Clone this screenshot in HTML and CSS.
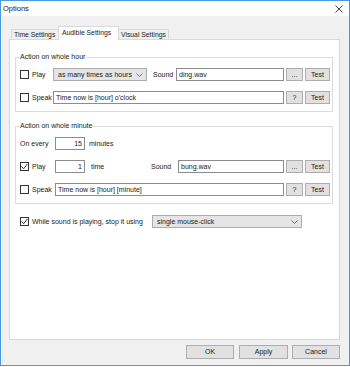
FILE: index.html
```html
<!DOCTYPE html>
<html lang="en">
<head>
    <meta charset="UTF-8">
    <title>Options</title>
    <link rel="stylesheet" href="styles.css">
</head>
<body>
    <div class="window">
        <div class="titlebar">
            <span class="title">Options</span>
            <svg class="close" width="8" height="8" viewBox="0 0 8 8"><path d="M0.5 0.5 L7.5 7.5 M7.5 0.5 L0.5 7.5" stroke="#333" stroke-width="0.9" fill="none"/></svg>
        </div>

        <div class="client">
            <div class="tabs">
                <div class="tab tab-time">Time Settings</div>
                <div class="tab tab-audible active">Audible Settings</div>
                <div class="tab tab-visual">Visual Settings</div>
            </div>

            <div class="panel">
                <!-- whole hour -->
                <div class="group">
                    <div class="group-title">Action on whole hour</div>
                    <div class="row">
                        <div class="lead"><span class="check"></span>Play</div>
                        <div class="select count-select">as many times as hours
                            <svg width="7" height="4" viewBox="0 0 7 4"><path d="M0.5 0.5 L3.5 3.5 L6.5 0.5" stroke="#555" stroke-width="0.8" fill="none"/></svg>
                        </div>
                        <span class="sound-label">Sound</span>
                        <div class="field grow">ding.wav</div>
                        <div class="btn btn-small">...</div>
                        <div class="btn btn-test">Test</div>
                    </div>
                    <div class="row">
                        <div class="lead"><span class="check"></span>Speak</div>
                        <div class="field grow">Time now is [hour] o'clock</div>
                        <div class="btn btn-small">?</div>
                        <div class="btn btn-test">Test</div>
                    </div>
                </div>

                <!-- whole minute -->
                <div class="group group-minute">
                    <div class="group-title">Action on whole minute</div>
                    <div class="row">
                        <div class="lead lead-wide">On every</div>
                        <div class="field num">15</div>
                        <span class="unit">minutes</span>
                    </div>
                    <div class="row">
                        <div class="lead lead-wide"><span class="check checked"><svg width="7" height="7" viewBox="0 0 7 7"><path d="M0.5 3.5 L2.6 5.8 L6.5 0.8" stroke="#222" stroke-width="0.9" fill="none"/></svg></span>Play</div>
                        <div class="field num">1</div>
                        <span class="unit unit-time">time</span>
                        <span class="sound-label sound-label-wide">Sound</span>
                        <div class="field grow">bung.wav</div>
                        <div class="btn btn-small">...</div>
                        <div class="btn btn-test">Test</div>
                    </div>
                    <div class="row">
                        <div class="lead lead-wide"><span class="check"></span>Speak</div>
                        <div class="field grow">Time now is [hour] [minute]</div>
                        <div class="btn btn-small">?</div>
                        <div class="btn btn-test">Test</div>
                    </div>
                </div>

                <div class="row stop-row">
                    <span class="check checked"><svg width="7" height="7" viewBox="0 0 7 7"><path d="M0.5 3.5 L2.6 5.8 L6.5 0.8" stroke="#222" stroke-width="0.9" fill="none"/></svg></span>
                    <span class="stop-label">While sound is playing, stop it using</span>
                    <div class="select stop-select">single mouse-click
                        <svg width="7" height="4" viewBox="0 0 7 4"><path d="M0.5 0.5 L3.5 3.5 L6.5 0.5" stroke="#555" stroke-width="0.8" fill="none"/></svg>
                    </div>
                </div>
            </div>

            <div class="footer">
                <div class="btn btn-dialog">OK</div>
                <div class="btn btn-dialog btn-apply">Apply</div>
                <div class="btn btn-dialog">Cancel</div>
            </div>
        </div>
    </div>
</body>
</html>
```

FILE: styles.css
```css
/* base */
* {
    margin: 0;
    padding: 0;
    box-sizing: border-box;
}

body {
    font-family: 'Liberation Sans', Arial, sans-serif;
    font-size: 7px;
    line-height: 10px;
    color: #1a1a1a;
    background: #fff;
}

.window {
    width: 350px;
    height: 366px;
    border: 1px solid #4a9ae4;
    background: #f0f0f0;
    display: flex;
    flex-direction: column;
}

/* title bar */
.titlebar {
    height: 15px;
    background: #fff;
    display: flex;
    align-items: center;
    justify-content: space-between;
    padding: 0 6px 0 2px;
}

.title {
    font-size: 7.5px;
}

/* tabs */
.client {
    flex: 1;
    display: flex;
    flex-direction: column;
}

.tabs {
    display: flex;
    align-items: flex-end;
    height: 13px;
    margin: 10px 0 0 10px;
}

.tab {
    height: 10px;
    border: 1px solid #d9d9d9;
    border-bottom: none;
    background: #f0f0f0;
    line-height: 9px;
    padding-left: 2px;
    font-size: 6.8px;
    white-space: nowrap;
    overflow: hidden;
}

.tab-time { width: 48px; }
.tab-audible { width: 61px; margin-left: -1px; }
.tab-visual { width: 51px; margin-left: -1px; }

.tab.active {
    height: 14px;
    margin-bottom: -1px;
    background: #fff;
    line-height: 12px;
    padding-left: 3px;
    position: relative;
    z-index: 1;
}

.panel {
    width: 331px;
    height: 301px;
    margin-left: 8px;
    background: #fff;
    border: 1px solid #d9d9d9;
    padding: 0 6px 0 5px;
    display: flex;
    flex-direction: column;
}

/* group boxes */
.group {
    margin-top: 17px;
    border: 1px solid #dcdcdc;
    padding: 0 2px 7px 4px;
    display: flex;
    flex-direction: column;
    gap: 10px;
}

.group-minute {
    margin-top: 14px;
}

.group-title {
    align-self: flex-start;
    margin: -6px 0 -4px -1px;
    padding: 0 1px;
    background: #fff;
}

.row {
    display: flex;
    align-items: center;
    height: 13px;
}

.lead {
    width: 33px;
    flex-shrink: 0;
    display: flex;
    align-items: center;
    white-space: nowrap;
}

.lead-wide {
    width: 35px;
}

.check {
    width: 9px;
    height: 9px;
    border: 1px solid #333;
    background: #fff;
    margin-right: 3px;
    flex-shrink: 0;
    display: flex;
    align-items: center;
    justify-content: center;
}

/* controls */
.field {
    height: 13px;
    border: 1px solid #8c8c8c;
    background: #fff;
    padding: 0 2px;
    line-height: 11px;
    white-space: nowrap;
    overflow: hidden;
}

.grow {
    flex: 1;
}

.num {
    width: 30px;
    text-align: right;
}

.select {
    height: 13px;
    border: 1px solid #acacac;
    background: #e5e5e5;
    padding: 0 3px 0 4px;
    line-height: 11px;
    display: flex;
    align-items: center;
    justify-content: space-between;
    white-space: nowrap;
}

.count-select { width: 94px; }

.sound-label {
    width: 23px;
    margin-left: 6px;
    flex-shrink: 0;
}

.sound-label-wide {
    width: 27px;
    margin-left: 0;
}

.unit {
    margin-left: 4px;
}

.unit-time {
    width: 60px;
    margin-left: 6px;
}

.btn {
    height: 13px;
    border: 1px solid #adadad;
    background: #e1e1e1;
    text-align: center;
    line-height: 11px;
    flex-shrink: 0;
}

.btn-small {
    width: 17px;
    margin-left: 2px;
}

.btn-test {
    width: 25px;
    margin-left: 2px;
}

/* stop row */
.stop-row {
    margin: 11px 0 0 5px;
}

.stop-label {
    width: 120px;
    white-space: nowrap;
}

.stop-select {
    width: 150px;
}

/* dialog buttons */
.footer {
    display: flex;
    justify-content: flex-end;
    gap: 5px;
    margin-top: 5px;
    padding-right: 9px;
}

.btn-dialog {
    width: 48px;
    height: 14px;
    line-height: 12px;
}

.btn-apply {
    width: 49px;
    margin-right: -1px;
}
```
